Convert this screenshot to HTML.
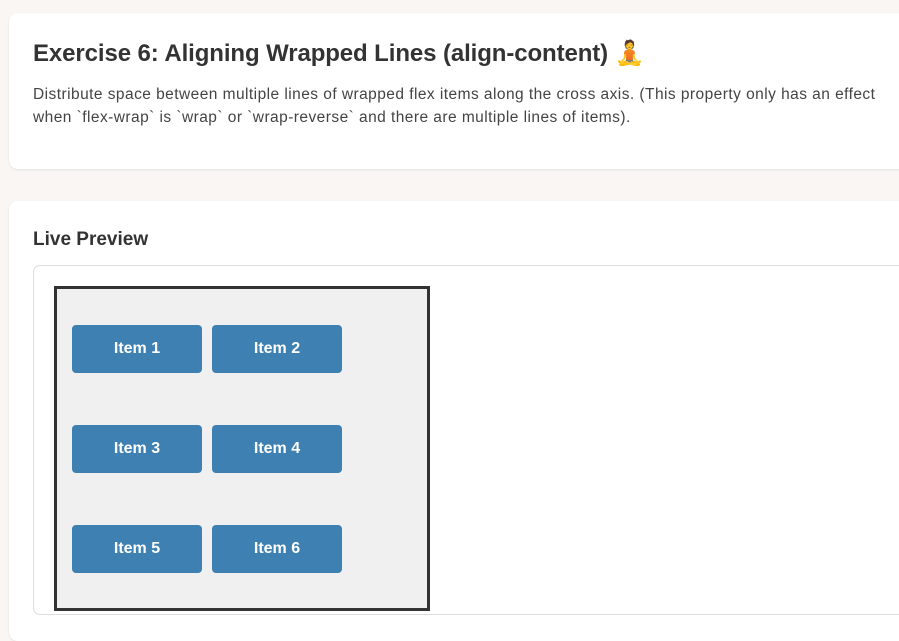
<!DOCTYPE html>
<html><head><style>
body{margin:0;background:#f9f6f3;font-family:"Liberation Sans",sans-serif;width:899px;height:624px;overflow:hidden;position:relative}
.card{position:absolute;left:9px;width:920px;background:#fff;border-radius:9px;box-shadow:0 1px 2px rgba(0,0,0,.08)}
h1{position:absolute;left:24px;top:26px;margin:0;font-size:24px;font-weight:bold;color:#333;white-space:nowrap;letter-spacing:-0.1px}
p{position:absolute;left:24px;top:70px;margin:0;font-size:15.5px;line-height:23px;color:#444;white-space:nowrap;letter-spacing:0.45px}
h2{position:absolute;left:24px;top:28px;margin:0;font-size:19px;font-weight:bold;color:#333}
.pv{position:absolute;left:24px;top:64px;width:900px;height:348px;border:1px solid #ddd;border-radius:7px}
.box{position:absolute;left:54px;top:286px;width:370px;height:319px;border:3px solid #333;background:#f0f0f0}
.it{position:absolute;width:130px;height:48px;background:#3d80b1;border-radius:4px;color:#fff;font:bold 16px "Liberation Sans",Arial,sans-serif;text-align:center;line-height:48px}
</style></head><body>
<div class="card" style="top:13px;height:156px">
<h1>Exercise 6: Aligning Wrapped Lines (align-content) 🧘</h1>
<p>Distribute space between multiple lines of wrapped flex items along the cross axis. (This property only has an effect<br>when `flex-wrap` is `wrap` or `wrap-reverse` and there are multiple lines of items).</p>
</div>
<div class="card" style="top:201px;height:440px">
<h2>Live Preview</h2>
<div class="pv"></div>
</div>
<div class="box"></div>
<div class="it" style="left:72px;top:325px">Item 1</div>
<div class="it" style="left:212px;top:325px">Item 2</div>
<div class="it" style="left:72px;top:425px">Item 3</div>
<div class="it" style="left:212px;top:425px">Item 4</div>
<div class="it" style="left:72px;top:525px">Item 5</div>
<div class="it" style="left:212px;top:525px">Item 6</div>
</body></html>
